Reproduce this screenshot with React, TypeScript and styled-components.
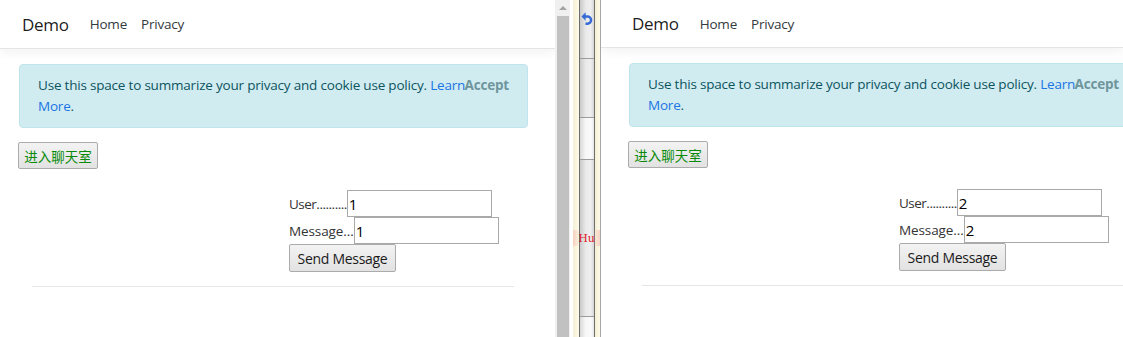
import styled, { createGlobalStyle } from "styled-components";

const GlobalStyle = createGlobalStyle`
  html, body {
    margin: 0;
    padding: 0;
    background: #fff;
  }
  body {
    font-family: "Open Sans", "Noto Sans", sans-serif;
    font-size: 13.5px;
    letter-spacing: -0.2px;
    color: #212529;
    overflow: hidden;
  }
  * {
    box-sizing: border-box;
  }
`;

const Screen = styled.div`
  display: flex;
  width: 1123px;
  height: 337px;
  overflow: hidden;
`;

const Pane = styled.div<{ $width: number; $edge?: boolean }>`
  flex: 0 0 ${(p) => p.$width}px;
  width: ${(p) => p.$width}px;
  height: 337px;
  overflow: hidden;
  background: #fff;
  border-left: ${(p) => (p.$edge ? "1px solid #a7a7a7" : "none")};
`;

const Navbar = styled.nav<{ $height: number; $inset: number }>`
  display: flex;
  align-items: center;
  height: ${(p) => p.$height}px;
  padding-left: ${(p) => p.$inset + 3}px;
  border-bottom: 1px solid #e5e5e5;
  box-shadow: 0 4px 10px rgba(0, 0, 0, 0.05);
`;

const Brand = styled.span`
  font-size: 17px;
  letter-spacing: -0.3px;
  color: rgba(0, 0, 0, 0.9);
  margin-right: 14px;
`;

const NavLink = styled.span`
  padding: 0 7px;
  font-size: 13.5px;
  color: #343a40;
`;

const Main = styled.main<{ $inset: number }>`
  padding: 15px 0 0 ${(p) => p.$inset}px;
`;

const Alert = styled.div`
  position: relative;
  width: 509px;
  padding: 10px 48px 10px 18px;
  line-height: 21px;
  color: #0c5460;
  background: #d1ecf1;
  border: 1px solid #bee5eb;
  border-radius: 4px;
`;

const AlertLink = styled.a`
  color: #1b74e4;
  text-decoration: none;
`;

const AcceptButton = styled.span`
  position: absolute;
  top: 10px;
  right: 18px;
  font-weight: 700;
  color: #6f959c;
`;

const ClassicButton = styled.button<{ $green?: boolean }>`
  display: block;
  height: 27px;
  padding: 0 4px;
  white-space: nowrap;
  font-family: ${(p) =>
    p.$green
      ? `"Noto Sans CJK SC", sans-serif`
      : `"Open Sans", "Noto Sans", sans-serif`};
  font-size: ${(p) => (p.$green ? "13.5px" : "14px")};
  letter-spacing: ${(p) => (p.$green ? "0" : "-0.3px")};
  color: ${(p) => (p.$green ? "#0a8a0a" : "#1a1a1a")};
  background: linear-gradient(#f3f3f3, #e2e2e2);
  border: 1px solid #ababab;
  border-radius: 2px;
`;

const EnterButton = styled(ClassicButton)`
  width: 80px;
  margin: 14px 0 0 -1px;
`;

const ChatForm = styled.div`
  margin: 21px 0 0 270px;
  color: #333;
`;

const FieldRow = styled.div`
  display: flex;
  align-items: center;
  height: 27px;
`;

const FieldLabel = styled.span<{ $spacing: number }>`
  font-size: 13.5px;
  letter-spacing: ${(p) => p.$spacing}px;
`;

const FieldInput = styled.input`
  width: 145px;
  height: 27px;
  padding: 0 1px;
  font-family: "Open Sans", "Noto Sans", sans-serif;
  font-size: 15px;
  color: #000;
  border: 1px solid #a9a9a9;
  outline: none;
`;

const SendButton = styled(ClassicButton)`
  width: 107px;
  height: 28px;
`;

const Rule = styled.hr`
  width: 482px;
  margin: 14px 0 0 13px;
  border: 0;
  border-top: 1px solid #e6e6e6;
`;

const Scrollbar = styled.div`
  flex: 0 0 15px;
  display: flex;
  flex-direction: column;
  align-items: center;
  background: #f0f0f0;
`;

const ScrollArrow = styled.div`
  flex: 0 0 16px;
  width: 100%;
  display: flex;
  align-items: center;
  justify-content: center;

  &::after {
    content: "";
    border-left: 4px solid transparent;
    border-right: 4px solid transparent;
    border-bottom: 4px solid #a3a3a3;
  }
`;

const ScrollThumb = styled.div`
  flex: 1;
  width: 12px;
  background: #c1c1c1;
`;

const Gutter = styled.div`
  position: relative;
  flex: 0 0 30px;
  display: flex;
  background: #fff;
  padding-left: 3px;
`;

const Cream = styled.div<{ $width: number }>`
  flex: 0 0 ${(p) => p.$width}px;
  background: linear-gradient(to right, #f4efd6, #fdfbe8);
`;

const ToolColumn = styled.div`
  flex: 0 0 16px;
  display: flex;
  flex-direction: column;
  border-left: 1px solid #6e6e6e;
  border-right: 1px solid #6e6e6e;
`;

const ToolCell = styled.div<{ $height: number; $light?: boolean }>`
  flex: 0 0 ${(p) => p.$height}px;
  display: flex;
  justify-content: center;
  padding-top: 10px;
  border-bottom: 1px solid #9c9c9c;
  background: ${(p) =>
    p.$light
      ? "linear-gradient(to right, #d9d9d9, #f7f7f7 40%, #fafafa 80%, #e6e6e6)"
      : "linear-gradient(to right, #c9c9c9, #e9e9e9 40%, #efefef 75%, #d6d6d6)"};
`;

const Marker = styled.span`
  position: absolute;
  left: 3px;
  right: 0;
  top: 230px;
  height: 16px;
  display: flex;
  justify-content: center;
  align-items: center;
  font-family: "DejaVu Serif", serif;
  font-size: 11px;
  letter-spacing: 0;
  color: #e0141e;
  background: linear-gradient(
    to right,
    rgba(248, 180, 170, 0.55),
    rgba(250, 210, 200, 0) 25%,
    rgba(250, 210, 200, 0) 75%,
    rgba(248, 180, 170, 0.55)
  );
`;

function UndoIcon() {
  return (
    <svg width="12" height="15" viewBox="0 0 12 15">
      <path
        d="M2 6.5 H6.5 A3.6 3.6 0 0 1 6.5 13.7 H4.5"
        fill="none"
        stroke="#3569d4"
        strokeWidth="2.4"
      />
      <path d="M0.5 6.5 L4.6 2.2 L4.6 10.8 Z" fill="#3569d4" />
    </svg>
  );
}

function DemoPage({
  width,
  inset,
  navHeight,
  user,
  message,
  edge,
}: {
  width: number;
  inset: number;
  navHeight: number;
  user: string;
  message: string;
  edge?: boolean;
}) {
  return (
    <Pane $width={width} $edge={edge}>
      <Navbar $height={navHeight} $inset={inset}>
        <Brand>Demo</Brand>
        <NavLink>Home</NavLink>
        <NavLink>Privacy</NavLink>
      </Navbar>
      <Main $inset={inset}>
        <Alert>
          Use this space to summarize your privacy and cookie use policy.{" "}
          <AlertLink>Learn More</AlertLink>.
          <AcceptButton>Accept</AcceptButton>
        </Alert>
        <EnterButton $green>进入聊天室</EnterButton>
        <ChatForm>
          <FieldRow>
            <FieldLabel $spacing={-0.5}>User..........</FieldLabel>
            <FieldInput defaultValue={user} />
          </FieldRow>
          <FieldRow>
            <FieldLabel $spacing={-0.1}>Message...</FieldLabel>
            <FieldInput defaultValue={message} />
          </FieldRow>
          <SendButton>Send Message</SendButton>
        </ChatForm>
        <Rule />
      </Main>
    </Pane>
  );
}

export default function App() {
  return (
    <>
      <GlobalStyle />
      <Screen>
        <DemoPage width={555} inset={19} navHeight={49} user="1" message="1" />
        <Scrollbar>
          <ScrollArrow />
          <ScrollThumb />
        </Scrollbar>
        <Gutter>
          <Cream $width={6} />
          <ToolColumn>
            <ToolCell $height={59}>
              <UndoIcon />
            </ToolCell>
            <ToolCell $height={59} />
            <ToolCell $height={42} $light />
            <ToolCell $height={157} />
            <ToolCell $height={30} $light />
          </ToolColumn>
          <Cream $width={5} />
          <Marker>Hu</Marker>
        </Gutter>
        <DemoPage
          width={523}
          inset={28}
          navHeight={48}
          user="2"
          message="2"
          edge
        />
      </Screen>
    </>
  );
}
